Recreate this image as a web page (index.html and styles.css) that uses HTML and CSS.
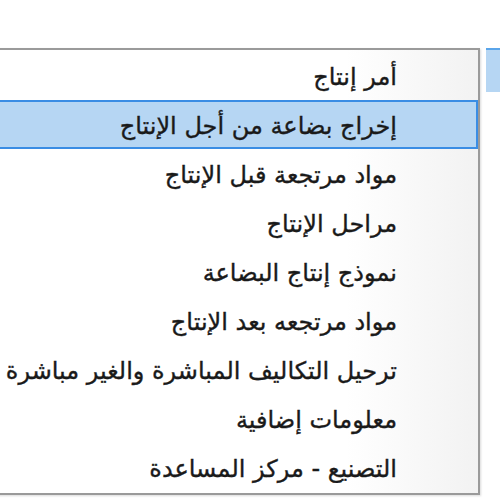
FILE: index.html
```html
<!DOCTYPE html>
<html lang="ar">
<head>
  <meta charset="UTF-8">
  <title>قائمة التصنيع</title>
  <link rel="stylesheet" href="styles.css">
</head>
<body>

  <div class="screen">
    <ul class="menu" dir="rtl">
      <li class="item">أمر إنتاج</li>
      <li class="item selected">إخراج بضاعة من أجل الإنتاج</li>
      <li class="item">مواد مرتجعة قبل الإنتاج</li>
      <li class="item">مراحل الإنتاج</li>
      <li class="item">نموذج إنتاج البضاعة</li>
      <li class="item">مواد مرتجعه بعد الإنتاج</li>
      <li class="item">ترحيل التكاليف المباشرة والغير مباشرة</li>
      <li class="item">معلومات إضافية</li>
      <li class="item">التصنيع - مركز المساعدة</li>
    </ul>
    <div class="parent-item"></div>
  </div>

</body>
</html>
```

FILE: styles.css
```css
body {
  margin: 0;
  background-color: white;
  font-family: "DejaVu Sans", Tahoma, sans-serif;
}

.screen {
  width: 500px;
  height: 500px;
  overflow: hidden;
  display: flex;
  justify-content: flex-end;
  align-items: flex-start;
  gap: 6px;
  padding-top: 48px;
  box-sizing: border-box;
}

.menu {
  flex-shrink: 0;
  width: 600px;
  margin: 0;
  padding: 1px 0;
  list-style: none;
  border: 2px solid #9a9a9a;
  background: linear-gradient(to right, #ffffff 0%, #ffffff 78%, #f2f2f2 100%);
  box-shadow: 1px 1px 2px rgba(0,0,0,0.15);
}

.item {
  height: 49px;
  line-height: 49px;
  padding-top: 2px;
  padding-right: 81px;
  font-size: 24px;
  color: #1a1a1a;
  -webkit-text-stroke: 0.35px #1a1a1a;
  white-space: nowrap;
  box-sizing: border-box;
}

.selected {
  background-color: #b6d6f3;
  border: 2px solid #3a8de4;
  line-height: 45px;
  padding-right: 79px;
}

.parent-item {
  width: 14px;
  height: 42px;
  background-color: #b6d6f3;
  border-top: 2px solid #5aa5ea;
  flex-shrink: 0;
}
```
